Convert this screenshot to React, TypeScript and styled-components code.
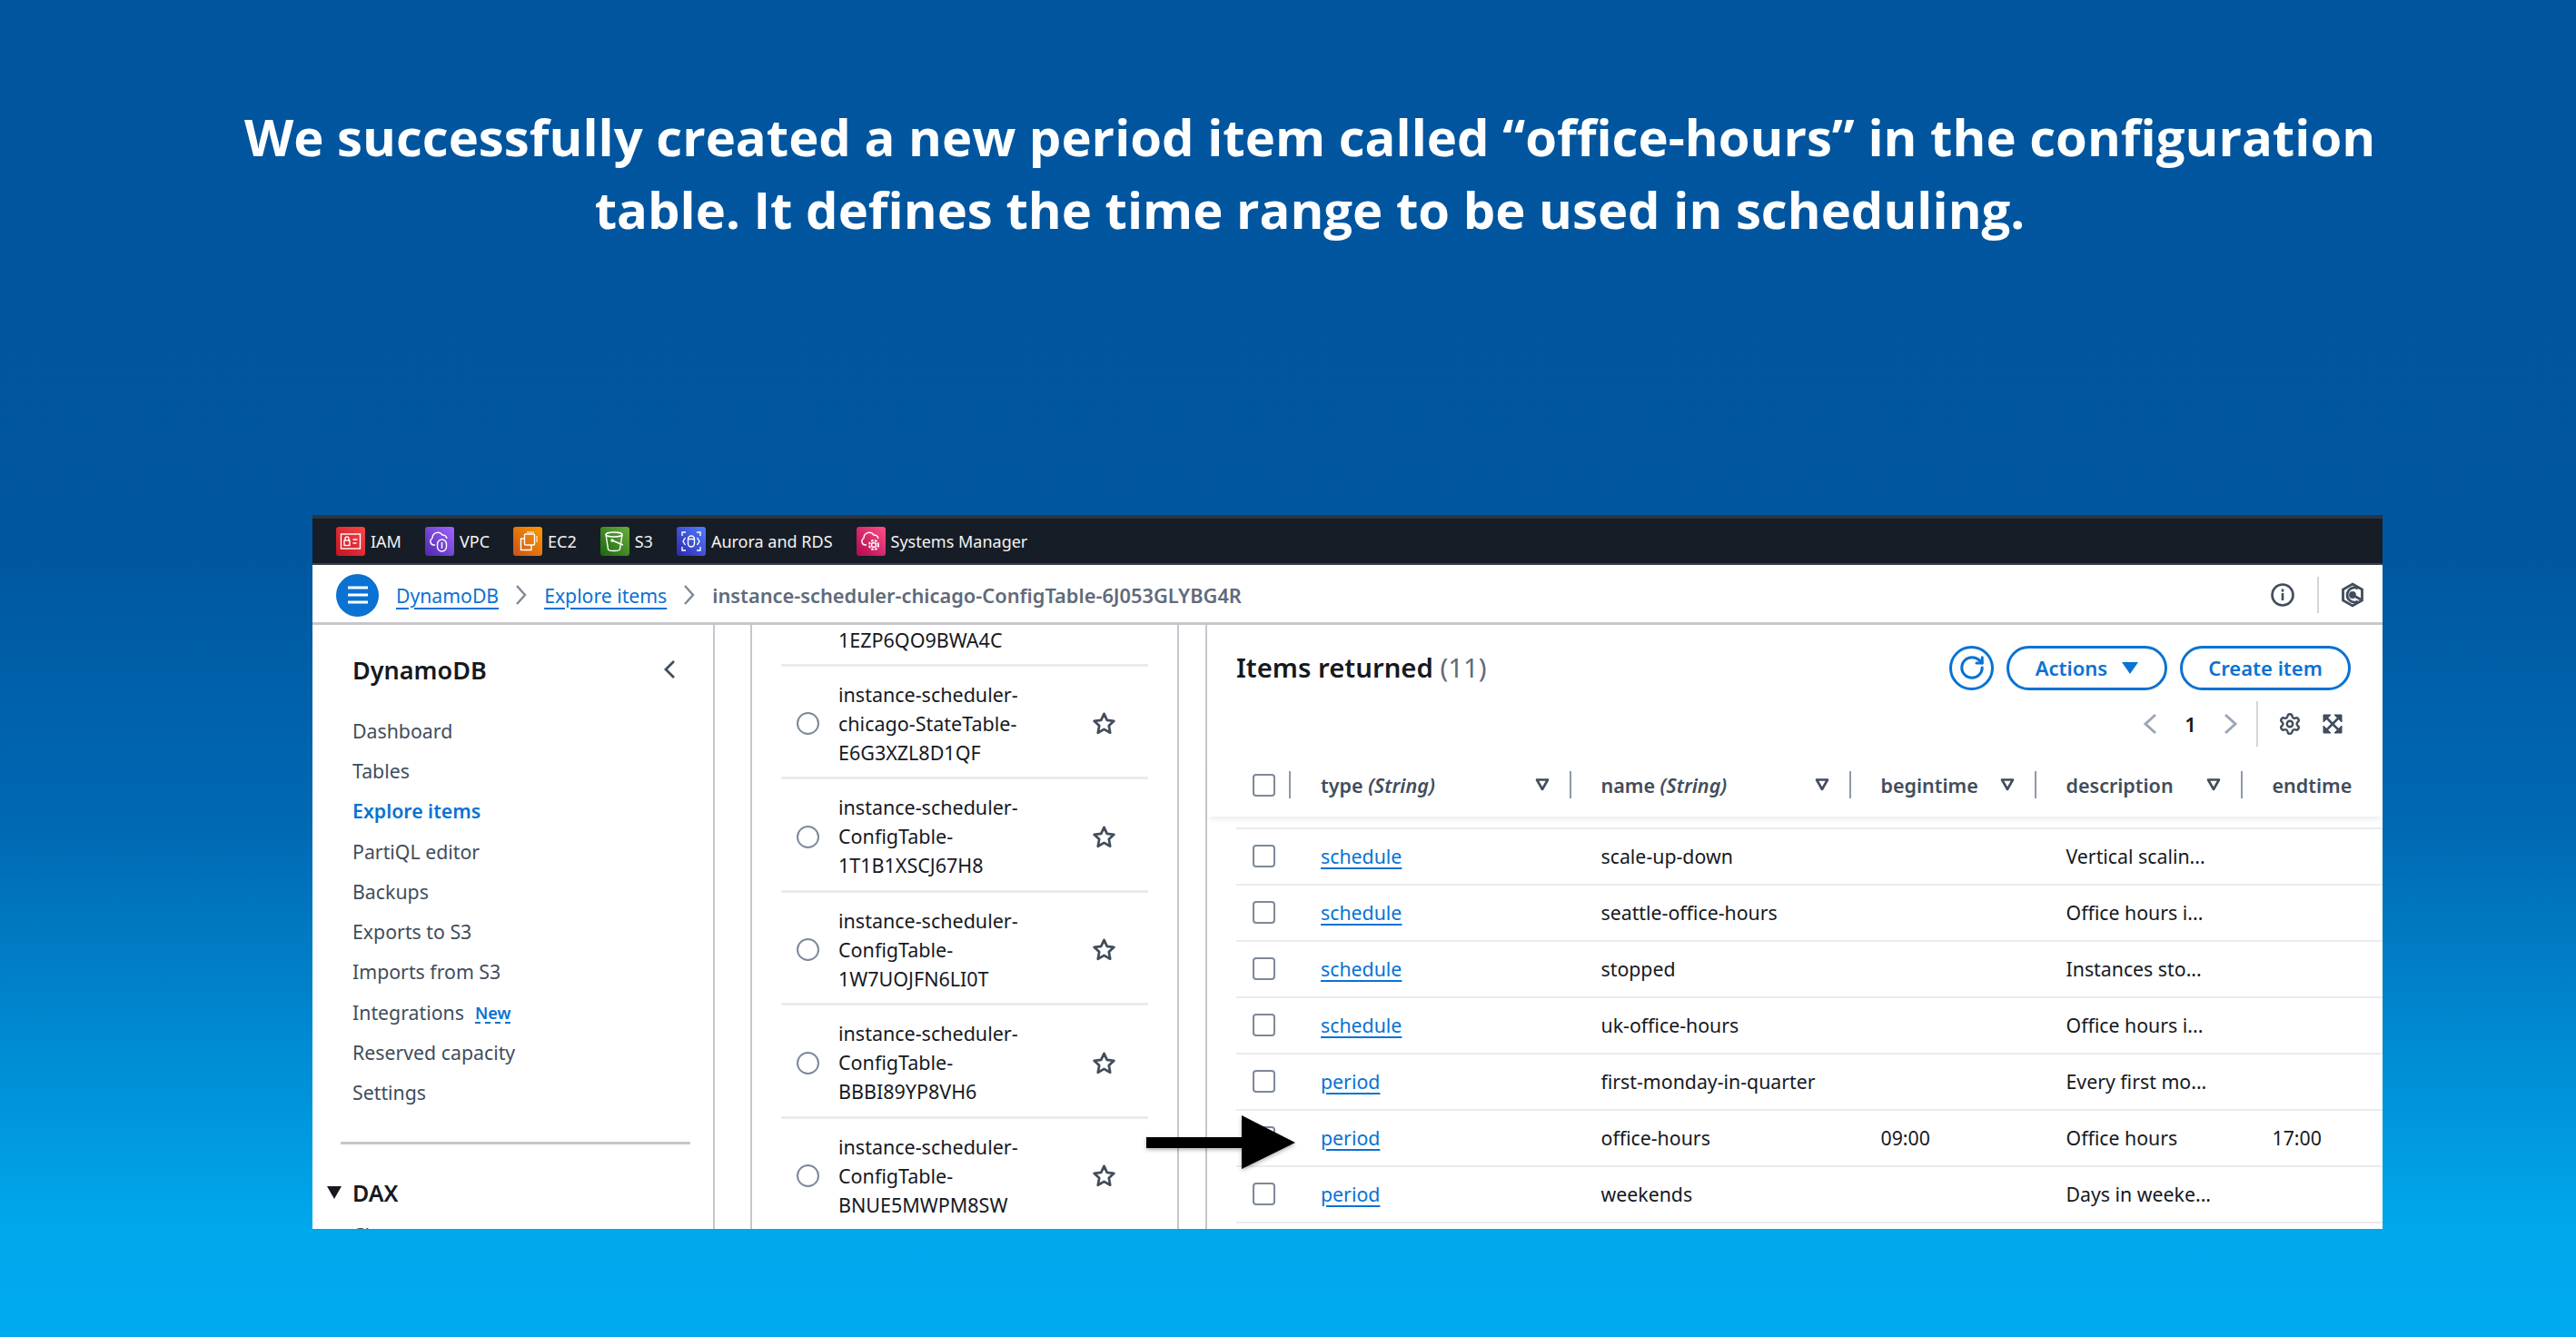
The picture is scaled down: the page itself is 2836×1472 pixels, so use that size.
import React from "react";
import styled, { createGlobalStyle } from "styled-components";
import { RotateCw, Settings } from "lucide-react";

const Global = createGlobalStyle`
  html, body { margin: 0; padding: 0; }
  body { font-family: "Noto Sans", "Open Sans", sans-serif; }
  * { box-sizing: border-box; }
`;

const Page = styled.div`
  width: 2836px;
  height: 1472px;
  overflow: hidden;
  background: linear-gradient(180deg, #00559e 0%, #00569f 40%, #0069b4 62%, #00a8ec 92%, #00aaee 100%);
  display: flex;
  flex-direction: column;
`;

const Headline = styled.h1`
  margin: 0;
  padding: 110px 0 0 48px;
  height: 567px;
  text-align: center;
  color: #fff;
  font-family: "Open Sans", "Noto Sans", sans-serif;
  font-weight: 700;
  font-size: 56.2px;
  line-height: 80px;
`;

const Win = styled.div`
  position: relative;
  margin-left: 344px;
  width: 2279px;
  height: 786px;
  background: #fff;
  overflow: hidden;
  display: flex;
  flex-direction: column;
  color: #16191f;
`;

const TopNav = styled.div`
  height: 55px;
  flex: none;
  background: #161d26;
  border-top: 4px solid #2f343c;
  display: flex;
  align-items: center;
  padding: 0 0 2px 26px;
  gap: 26px;
  font-size: 18px;
  color: #f2f3f3;
  box-shadow: inset 0 -2px 0 #3a3f47;
`;

const Service = styled.div`
  display: flex;
  align-items: center;
  gap: 6px;
`;

const Tile = styled.svg`
  width: 32px;
  height: 32px;
  display: block;
  border-radius: 3px;
`;

const Crumbs = styled.div`
  height: 66px;
  flex: none;
  border-bottom: 3px solid #c6c6cd;
  display: flex;
  align-items: center;
  padding: 3px 20px 0 26px;
  font-size: 21.2px;
`;

const Burger = styled.button`
  width: 47px;
  height: 47px;
  padding: 0;
  border: 0;
  border-radius: 50%;
  background: #0972d3;
  display: flex;
  align-items: center;
  justify-content: center;
  margin-right: 19px;
`;

const CrumbLink = styled.a`
  color: #0972d3;
  text-decoration: underline;
  text-underline-offset: 5px;
  text-decoration-thickness: 2px;
`;

const CrumbSep = styled.svg`
  width: 14px;
  height: 26px;
  margin: 0 18px;
  color: #7d8998;
  flex: none;
`;

const CrumbCurrent = styled.span`
  color: #5f6b7a;
  font-weight: 600;
  font-size: 21.8px;
`;

const CrumbTools = styled.div`
  margin-left: auto;
  display: flex;
  align-items: center;
  color: #414d5c;
`;

const ToolDivider = styled.div`
  width: 2px;
  height: 40px;
  background: #d1d5db;
  margin: 0 24px;
`;

const Body = styled.div`
  flex: 1;
  min-height: 0;
  display: flex;
`;

const Sidebar = styled.aside`
  width: 443px;
  flex: none;
  border-right: 2px solid #c6c6cd;
  padding: 29px 0 0 44px;
`;

const SideHead = styled.div`
  display: flex;
  align-items: center;
  justify-content: space-between;
  padding-right: 41px;
  height: 40px;
  font-size: 27px;
  font-weight: 600;
  margin-bottom: 25px;
`;

const SideItem = styled.div<{ $active?: boolean }>`
  height: 44.3px;
  display: flex;
  align-items: center;
  gap: 12px;
  font-size: 21.3px;
  color: ${(p) => (p.$active ? "#0972d3" : "#414d5c")};
  font-weight: ${(p) => (p.$active ? 600 : 400)};
`;

const NewTag = styled.span`
  color: #0972d3;
  font-size: 18px;
  font-weight: 600;
  border-bottom: 2px dashed #0972d3;
  line-height: 20px;
  margin-top: 4px;
`;

const SideRule = styled.div`
  height: 3px;
  background: #c6c6cd;
  margin: 32px 25px 0 -13px;
`;

const DaxHead = styled.div`
  display: flex;
  align-items: center;
  margin: 33px 0 0 -28px;
  gap: 12px;
  font-size: 25px;
  font-weight: 600;
  height: 40px;
`;

const DaxCaret = styled.svg`
  width: 16px;
  height: 14px;
  flex: none;
`;

const SideSub = styled(SideItem)`
  margin-top: 4px;
`;

const TablesPanel = styled.section`
  width: 472px;
  flex: none;
  margin-left: 39px;
  border-left: 2px solid #c6c6cd;
  border-right: 2px solid #c6c6cd;
  padding: 0 32px;
`;

const TableRow = styled.div<{ $clip?: boolean }>`
  height: ${(p) => (p.$clip ? "45.5px" : "124.5px")};
  border-bottom: 3px solid #e9ebed;
  display: flex;
  align-items: center;
  font-size: 21.5px;
  line-height: 32px;
  padding: ${(p) => (p.$clip ? "0 0 8px 63px" : "5px 35px 0 17px")};
`;

const Radio = styled.div`
  width: 25px;
  height: 25px;
  border-radius: 50%;
  border: 2.5px solid #7d8998;
  flex: none;
  margin-right: 21px;
`;

const TableName = styled.div`
  flex: 1;
`;

const Star = styled.svg`
  width: 27px;
  height: 27px;
  color: #414d5c;
  flex: none;
`;

const Main = styled.section`
  flex: 1;
  min-width: 0;
  margin-left: 29px;
  border-left: 2px solid #c6c6cd;
`;

const MainHead = styled.div`
  height: 82px;
  padding: 12px 35px 0 32px;
  display: flex;
  align-items: center;
  gap: 14px;
`;

const MainTitle = styled.h2`
  margin: 0 auto 0 0;
  font-size: 29.3px;
  font-weight: 600;
`;

const Count = styled.span`
  font-weight: 400;
  color: #5f6b7a;
`;

const RefreshBtn = styled.button`
  width: 49px;
  height: 49px;
  padding: 0;
  border-radius: 50%;
  border: 3px solid #0972d3;
  background: #fff;
  color: #0972d3;
  display: flex;
  align-items: center;
  justify-content: center;
`;

const PillBtn = styled.button<{ $w: number }>`
  width: ${(p) => p.$w}px;
  height: 49px;
  border-radius: 25px;
  border: 3px solid #0972d3;
  background: #fff;
  color: #0972d3;
  font-family: inherit;
  font-size: 22px;
  font-weight: 600;
  display: flex;
  align-items: center;
  justify-content: center;
  gap: 16px;
  padding: 0;
`;

const Pager = styled.div`
  height: 54px;
  display: flex;
  align-items: center;
  justify-content: flex-end;
  padding-right: 42px;
  color: #414d5c;
`;

const PagerNum = styled.span`
  width: 73px;
  text-align: center;
  font-size: 22px;
  font-weight: 600;
  color: #16191f;
`;

const PagerDivider = styled.div`
  width: 2px;
  height: 50px;
  background: #d1d5db;
  margin: 0 22px 0 20px;
`;

const PagerChevron = styled.svg`
  width: 16px;
  height: 24px;
  color: #9ba7b6;
`;

const PagerIcon = styled.svg`
  width: 26px;
  height: 26px;
  display: block;
`;

const PagerSpacer = styled.div`
  width: 21px;
`;

const columns = "60px 308.5px 308px 204px 227px 1fr";

const HeaderRow = styled.div`
  height: 70px;
  margin-top: 5px;
  display: grid;
  grid-template-columns: ${columns};
  align-items: center;
  box-shadow: 0 5px 6px -2px rgba(0, 7, 22, 0.08);
  position: relative;
  font-size: 21.5px;
  font-weight: 600;
  color: #414d5c;
  padding-left: 32px;
`;

const HeadCheck = styled.div`
  display: flex;
  align-items: center;
  height: 30px;
  padding-left: 18px;
  justify-content: space-between;
`;

const HeadCell = styled.div`
  display: flex;
  align-items: center;
  height: 30px;
  padding-left: 33px;
`;

const HeadLabel = styled.span`
  flex: 1;
  white-space: nowrap;
`;

const HeadType = styled.em`
  font-weight: 600;
`;

const FilterArrow = styled.svg`
  width: 16px;
  height: 14px;
  margin-right: 22px;
  flex: none;
`;

const ColSep = styled.div`
  width: 2px;
  height: 30px;
  background: #8d99a8;
  flex: none;
`;

const Check = styled.div`
  width: 25px;
  height: 25px;
  border: 2.5px solid #7d8998;
  border-radius: 4px;
  background: #fff;
`;

const Rows = styled.div`
  margin-top: 12px;
  margin-left: 32px;
  border-top: 2px solid #e9ebed;
`;

const Row = styled.div`
  height: 62px;
  display: grid;
  grid-template-columns: ${columns};
  align-items: center;
  border-bottom: 2.5px solid #e9ebed;
  font-size: 21.3px;
  padding-bottom: 2px;
`;

const CheckCell = styled.div`
  padding-left: 18px;
`;

const Cell = styled.div`
  padding-left: 33px;
  white-space: nowrap;
`;

const RowLink = styled.a`
  color: #0972d3;
  text-decoration: underline;
  text-underline-offset: 4px;
  text-decoration-thickness: 2px;
`;

const Arrow = styled.svg`
  position: absolute;
  left: 918px;
  top: 661px;
  width: 164px;
  height: 60px;
  filter: drop-shadow(0 2px 2px rgba(0, 0, 0, 0.3));
`;

const Grad = ({ id, a, b }: { id: string; a: string; b: string }) => (
  <linearGradient id={id} x1="0" y1="1" x2="1" y2="0">
    <stop offset="0" stopColor={a} />
    <stop offset="1" stopColor={b} />
  </linearGradient>
);

const svc = { fill: "none", stroke: "#fff", strokeWidth: 1.4 };

const services: { name: string; a: string; b: string; art: React.ReactNode }[] = [
  {
    name: "IAM", a: "#c7131f", b: "#f54749",
    art: (
      <g {...svc}>
        <rect x="5.500" y="8" width="21" height="16" />
        <rect x="9" y="15" width="6" height="5.500" />
        <path d="M10 15v-2a2 2 0 0 1 4 0v2M18.500 14h5M18.500 18h4" />
      </g>
    ),
  },
  {
    name: "VPC", a: "#4d27aa", b: "#a166ff",
    art: (
      <g {...svc}>
        <path d="M11 20H9.500a4 4 0 0 1-1.500-7.500 6 6 0 0 1 11-3.500 5 5 0 0 1 5 4" />
        <rect x="13.500" y="14" width="10" height="13" rx="5" />
        <path d="M18.500 17v7" />
      </g>
    ),
  },
  {
    name: "EC2", a: "#c8511b", b: "#ff9900",
    art: (
      <g {...svc}>
        <rect x="12.500" y="8" width="11" height="12" rx="1" />
        <path d="M12.500 13H8.500v12.500H20V20" />
        <path d="M15 6h8M26 10v7" strokeWidth="1" />
      </g>
    ),
  },
  {
    name: "S3", a: "#1b660f", b: "#6cae3e",
    art: (
      <g {...svc}>
        <ellipse cx="15" cy="8.500" rx="9" ry="2.500" />
        <path d="M6 8.500l2.500 16a6.500 2 0 0 0 13 0l2.500-16" />
        <path d="M13 15l12 5" />
        <circle cx="13" cy="15" r="1" fill="#fff" />
      </g>
    ),
  },
  {
    name: "Aurora and RDS", a: "#2e27ad", b: "#527fff",
    art: (
      <g {...svc}>
        <rect x="12.500" y="10" width="7" height="12" rx="3.500" />
        <path d="M12.500 13.500h7M6 10V6h4M22 6h4v4M6 22v4h4M26 22v4h-4M9.500 12l-2.500 4 2.500 4M22.500 12l2.500 4-2.500 4" />
      </g>
    ),
  },
  {
    name: "Systems Manager", a: "#b0084d", b: "#ff4f8b",
    art: (
      <g {...svc}>
        <path d="M11 20H9.500a4 4 0 0 1-1.500-7.500 6 6 0 0 1 11-3.500 5 5 0 0 1 5 4" />
        <circle cx="19" cy="20" r="2.500" />
        <circle cx="19" cy="20" r="5" strokeDasharray="2.500 1.500" strokeWidth="2" />
      </g>
    ),
  },
];

const side = ["Dashboard", "Tables", "Explore items", "PartiQL editor", "Backups", "Exports to S3", "Imports from S3"];

const tables = [
  ["instance-scheduler-", "chicago-StateTable-", "E6G3XZL8D1QF"],
  ["instance-scheduler-", "ConfigTable-", "1T1B1XSCJ67H8"],
  ["instance-scheduler-", "ConfigTable-", "1W7UOJFN6LI0T"],
  ["instance-scheduler-", "ConfigTable-", "BBBI89YP8VH6"],
  ["instance-scheduler-", "ConfigTable-", "BNUE5MWPM8SW"],
];

const items = [
  ["schedule", "scale-up-down", "", "Vertical scalin...", ""],
  ["schedule", "seattle-office-hours", "", "Office hours i...", ""],
  ["schedule", "stopped", "", "Instances sto...", ""],
  ["schedule", "uk-office-hours", "", "Office hours i...", ""],
  ["period", "first-monday-in-quarter", "", "Every first mo...", ""],
  ["period", "office-hours", "09:00", "Office hours", "17:00"],
  ["period", "weekends", "", "Days in weeke...", ""],
];

const heads: { label: string; type?: string }[] = [
  { label: "type", type: "String" },
  { label: "name", type: "String" },
  { label: "begintime" },
  { label: "description" },
];

const Chevron = () => (
  <CrumbSep viewBox="0 0 14 26" fill="none" stroke="currentColor" strokeWidth="2.4">
    <path d="M2 3l9 10-9 10" />
  </CrumbSep>
);

const StarIcon = () => (
  <Star viewBox="0 0 24 24" fill="none" stroke="currentColor" strokeWidth="2.4" strokeLinejoin="round">
    <path d="M12 2.500l2.900 6.300 6.800.8-5 4.700 1.300 6.800-6-3.400-6 3.400 1.300-6.800-5-4.700 6.800-.8z" />
  </Star>
);

export default function App() {
  return (
    <Page>
      <Global />
      <Headline>
        We successfully created a new period item called “office-hours” in the configuration
        <br />
        table. It defines the time range to be used in scheduling.
      </Headline>
      <Win>
        <TopNav>
          {services.map((s, i) => (
            <Service key={s.name}>
              <Tile viewBox="0 0 32 32">
                <defs>
                  <Grad id={`g${i}`} a={s.a} b={s.b} />
                </defs>
                <rect width="32" height="32" fill={`url(#g${i})`} />
                {s.art}
              </Tile>
              {s.name}
            </Service>
          ))}
        </TopNav>
        <Crumbs>
          <Burger aria-label="menu">
            <svg width="24" height="22" viewBox="0 0 24 22" fill="none" stroke="#fff" strokeWidth="3">
              <path d="M1 3h22M1 11h22M1 19h22" />
            </svg>
          </Burger>
          <CrumbLink>DynamoDB</CrumbLink>
          <Chevron />
          <CrumbLink>Explore items</CrumbLink>
          <Chevron />
          <CrumbCurrent>instance-scheduler-chicago-ConfigTable-6J053GLYBG4R</CrumbCurrent>
          <CrumbTools>
            <svg width="28" height="28" viewBox="0 0 28 28" fill="none" stroke="currentColor" strokeWidth="2.6">
              <circle cx="14" cy="14" r="11.500" />
              <path d="M14 12v8M14 7.500v3" />
            </svg>
            <ToolDivider />
            <svg width="26" height="28" viewBox="0 0 26 28" fill="none" stroke="currentColor" strokeWidth="2.8">
              <path d="M13 2l10.500 6v12L13 26 2.500 20V8z" />
              <circle cx="13" cy="14" r="2.500" fill="currentColor" />
              <path d="M13 14l9 5M19 7a8 8 0 1 0 0 14" />
            </svg>
          </CrumbTools>
        </Crumbs>
        <Body>
          <Sidebar>
            <SideHead>
              DynamoDB
              <svg width="14" height="22" viewBox="0 0 14 22" fill="none" stroke="#414d5c" strokeWidth="2.8">
                <path d="M12 2L3 11l9 9" />
              </svg>
            </SideHead>
            {side.map((t) => (
              <SideItem key={t} $active={t === "Explore items"}>
                {t}
              </SideItem>
            ))}
            <SideItem>
              Integrations <NewTag>New</NewTag>
            </SideItem>
            <SideItem>Reserved capacity</SideItem>
            <SideItem>Settings</SideItem>
            <SideRule />
            <DaxHead>
              <DaxCaret viewBox="0 0 16 14">
                <path d="M0 0h16L8 14z" fill="#16191f" />
              </DaxCaret>
              DAX
            </DaxHead>
            <SideSub>Clusters</SideSub>
          </Sidebar>
          <TablesPanel>
            <TableRow $clip>1EZP6QO9BWA4C</TableRow>
            {tables.map((t) => (
              <TableRow key={t[2]}>
                <Radio />
                <TableName>
                  {t[0]}
                  <br />
                  {t[1]}
                  <br />
                  {t[2]}
                </TableName>
                <StarIcon />
              </TableRow>
            ))}
          </TablesPanel>
          <Main>
            <MainHead>
              <MainTitle>
                Items returned <Count>(11)</Count>
              </MainTitle>
              <RefreshBtn aria-label="refresh">
                <RotateCw size={30} strokeWidth={2.4} />
              </RefreshBtn>
              <PillBtn $w={177}>
                Actions
                <svg width="18" height="13" viewBox="0 0 18 13">
                  <path d="M0 0h18L9 13z" fill="currentColor" />
                </svg>
              </PillBtn>
              <PillBtn $w={188}>Create item</PillBtn>
            </MainHead>
            <Pager>
              <PagerChevron viewBox="0 0 16 24" fill="none" stroke="currentColor" strokeWidth="3">
                <path d="M14 2L3 12l11 10" />
              </PagerChevron>
              <PagerNum>1</PagerNum>
              <PagerChevron viewBox="0 0 16 24" fill="none" stroke="currentColor" strokeWidth="3">
                <path d="M2 2l11 10L2 22" />
              </PagerChevron>
              <PagerDivider />
              <Settings size={26} strokeWidth={2.2} />
              <PagerSpacer />
              <PagerIcon viewBox="0 0 26 26" fill="none" stroke="currentColor" strokeWidth="2.6">
                <path d="M3 3h8L3 11zM23 3h-8l8 8zM3 23h8l-8-8zM23 23h-8l8-8z" fill="currentColor" strokeWidth="1" />
                <path d="M6 6l14 14M20 6L6 20" />
              </PagerIcon>
            </Pager>
            <HeaderRow>
              <HeadCheck>
                <Check />
                <ColSep />
              </HeadCheck>
              {heads.map((h) => (
                <HeadCell key={h.label}>
                  <HeadLabel>
                    {h.label} {h.type && <HeadType>({h.type})</HeadType>}
                  </HeadLabel>
                  <FilterArrow viewBox="0 0 16 14" fill="none" stroke="#414d5c" strokeWidth="2.600">
                    <path d="M2 1.500h12L8 12z" strokeLinejoin="round" />
                  </FilterArrow>
                  <ColSep />
                </HeadCell>
              ))}
              <HeadCell>endtime</HeadCell>
            </HeaderRow>
            <Rows>
              {items.map((r) => (
                <Row key={r[1]}>
                  <CheckCell>
                    <Check />
                  </CheckCell>
                  <Cell>
                    <RowLink>{r[0]}</RowLink>
                  </Cell>
                  <Cell>{r[1]}</Cell>
                  <Cell>{r[2]}</Cell>
                  <Cell>{r[3]}</Cell>
                  <Cell>{r[4]}</Cell>
                </Row>
              ))}
            </Rows>
          </Main>
        </Body>
        <Arrow viewBox="0 0 164 60">
          <path d="M0 24h105V0l59 30-59 29V36H0z" fill="#000" />
        </Arrow>
      </Win>
    </Page>
  );
}
